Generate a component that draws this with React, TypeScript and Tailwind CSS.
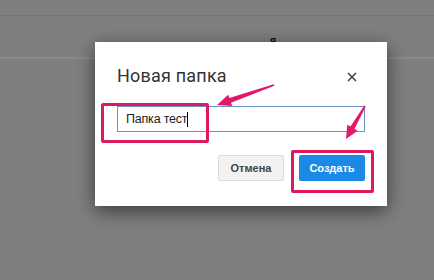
import React from "react";

export default function App() {
  return (
    <div className="relative w-[434px] h-[280px] overflow-hidden bg-[#7f7f7f]" style={{ fontFamily: "Roboto, 'Liberation Sans', sans-serif" }}>
      {/* background page */}
      <div className="h-[16px] border-b border-[#747474]" />
      <div className="h-[43px] border-b-2 border-[#8a8a8a] relative">
        <span className="absolute left-[270px] top-[17px] text-[11px] font-bold text-[#111]">я</span>
      </div>

      {/* dialog */}
      <div className="absolute left-[95px] top-[42px] w-[292px] h-[164px] bg-white shadow-[0_5px_18px_rgba(0,0,0,0.55)] flex flex-col px-[22px] pt-[22px] pb-[23px]">
        <div className="flex items-center justify-between h-[24px]">
          <span className="text-[18px] text-[#333] leading-[24px] tracking-[0.2px]">Новая папка</span>
          <svg width="10" height="10" viewBox="0 0 10 10" className="mr-[8px] mt-[1px]">
            <path d="M1 1 L9 9 M9 1 L1 9" stroke="#444" strokeWidth="1.6" />
          </svg>
        </div>
        <div className="mt-[18px] h-[26px] border border-[#6d94c8] flex items-center pl-[8px]" style={{ fontFamily: "'Liberation Sans', Arial, sans-serif" }}>
          <span className="text-[12.5px] text-[#222] tracking-[-0.2px]">Папка тест</span>
          <span className="w-[1px] h-[15px] bg-black" />
        </div>
        <div className="mt-[23px] flex justify-end gap-[15px]" style={{ fontFamily: "'Liberation Sans', Arial, sans-serif" }}>
          <div className="w-[66px] h-[26px] rounded-[2px] bg-[#f2f2f2] border border-[#dcdcdc] flex items-center justify-center text-[11px] font-bold text-[#444]">Отмена</div>
          <div className="w-[66px] h-[26px] rounded-[2px] bg-[#1a8ae6] flex items-center justify-center text-[11px] font-bold text-white">Создать</div>
        </div>
      </div>

      {/* annotations */}
      <div className="absolute left-[101px] top-[103px] w-[108px] h-[40px] border-[3px] border-[#dd1a60] rounded-[2px]" />
      <div className="absolute left-[291px] top-[150px] w-[83px] h-[43px] border-[3px] border-[#dd1a60] rounded-[2px]" />
      <svg className="absolute left-0 top-0" width="434" height="280" viewBox="0 0 434 280">
        <polygon points="273.7,84.2 274.3,85.8 231.0,102.8 232.2,106.1 217,105 228.2,94.7 229.4,98.0" fill="#e2186a" />
        <polygon points="364.3,105.6 365.7,106.4 354.5,128.9 357.7,130.7 346,139 347.3,124.7 350.5,126.6" fill="#e2186a" />
      </svg>
    </div>
  );
}
